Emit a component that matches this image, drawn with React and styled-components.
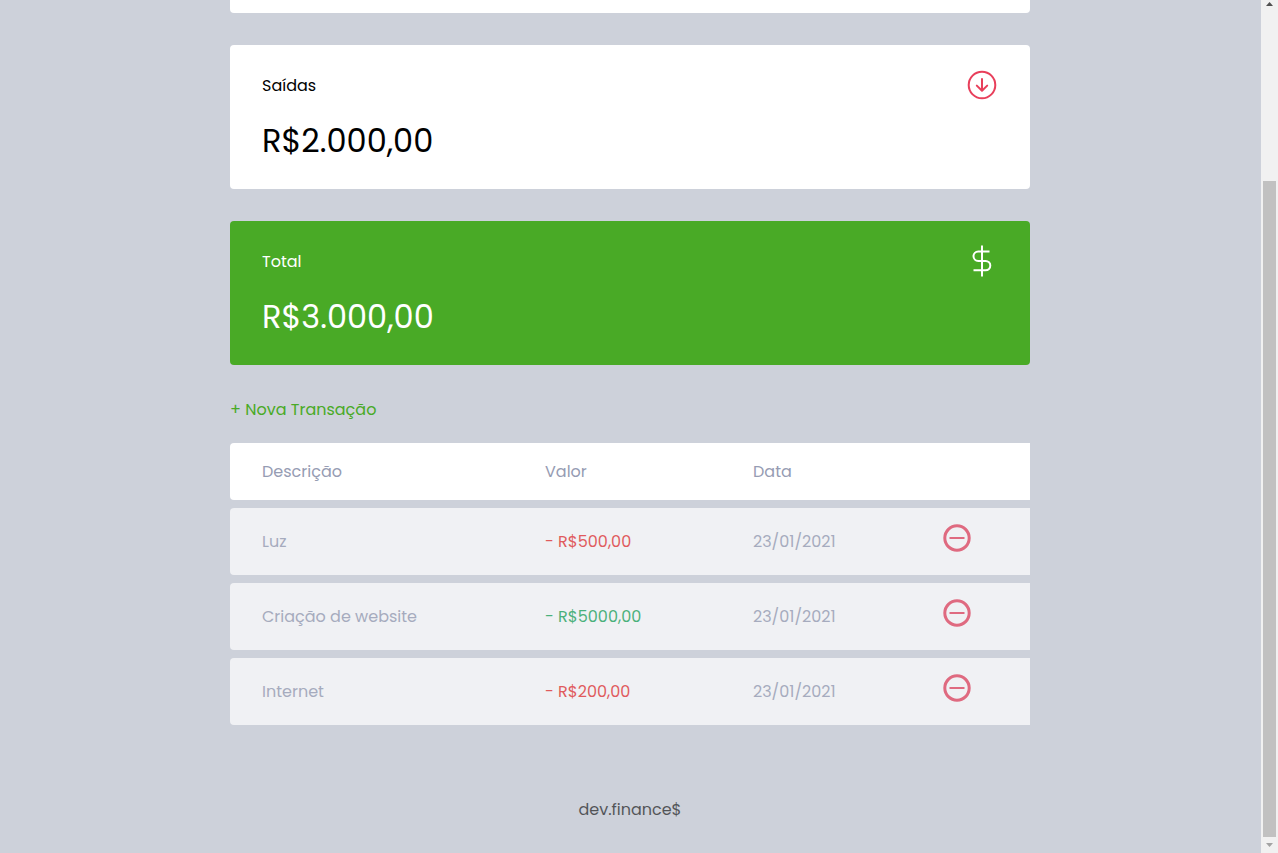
import React from "react";
import styled, { createGlobalStyle, css } from "styled-components";

const GlobalStyle = createGlobalStyle`
  * {
    margin: 0;
    padding: 0;
    box-sizing: border-box;
  }

  body {
    background: #cdd1da;
    font-family: Poppins, Inter, "Noto Sans", sans-serif;
    font-size: 16px;
    line-height: 26px;
    font-weight: 400;
  }
`;

const Page = styled.div`
  display: flex;
  min-height: 100vh;
`;

const Content = styled.div`
  flex: 1;
  min-width: 0;
  padding-right: 1px;
`;

const Container = styled.main`
  width: 90%;
  max-width: 800px;
  margin: 0 auto;
`;

const Balance = styled.section`
  display: grid;
  gap: 32px;
`;

const CardEnd = styled.div`
  height: 13px;
  background: #fff;
  border-radius: 0 0 4px 4px;
`;

const Card = styled.article`
  padding: 24px 32px;
  border-radius: 4px;
  background: #fff;
  color: #000;

  ${({ $total }) =>
    $total &&
    css`
      background: #49aa26;
      color: #fff;
    `}
`;

const CardHeader = styled.header`
  display: flex;
  align-items: center;
  justify-content: space-between;
`;

const CardTitle = styled.h3`
  padding-top: 2px;
  font-size: 16px;
  font-weight: 400;
`;

const CardIcon = styled.svg`
  display: block;
  width: 32px;
  height: 32px;
  fill: none;
  stroke-width: 2;
`;

const CardValue = styled.p`
  margin-top: 16px;
  font-size: 32px;
  line-height: 48px;
`;

const Transactions = styled.section`
  padding-top: 32px;
`;

const NewLink = styled.a`
  display: block;
  width: fit-content;
  margin-bottom: 12px;
  color: #49aa26;
  text-decoration: none;

  &:hover {
    color: #3dd705;
  }
`;

const Table = styled.table`
  width: 100%;
  table-layout: fixed;
  border-spacing: 0 8px;
  color: #969cb3;
`;

const Col = styled.col`
  width: ${({ $width }) => $width};
`;

const HeadCell = styled.th`
  height: 57px;
  padding: 0 32px;
  background: #fff;
  font-weight: 400;
  text-align: left;

  &:first-child {
    border-radius: 4px 0 0 4px;
  }
`;

const amountColors = { expense: "#e92929", income: "#12a454" };

const Cell = styled.td`
  height: 67px;
  padding: 0 32px;
  background: #fff;
  opacity: 0.7;
  color: ${({ $kind }) => amountColors[$kind] || "inherit"};

  &:first-child {
    border-radius: 4px 0 0 4px;
  }
`;

const ActionCell = styled(Cell)`
  padding-top: 16px;
  vertical-align: top;
`;

const RemoveButton = styled.button`
  display: block;
  border: 0;
  background: none;
  cursor: pointer;
`;

const RemoveIcon = styled.svg`
  display: block;
  width: 28px;
  height: 28px;
  fill: none;
  stroke: #e83f5b;
`;

const Footer = styled.footer`
  padding: 64px 0 30px;
  color: #000;
  opacity: 0.6;
  text-align: center;
`;

const ScrollTrack = styled.div`
  display: flex;
  flex-direction: column;
  align-items: center;
  width: 17px;
  padding: 2px 0 6px;
  background: #f1f1f1;
`;

const ScrollSpace = styled.div`
  flex: 175;
`;

const ScrollThumb = styled.div`
  flex: 656;
  width: 13px;
  margin-bottom: 6px;
  background: #c1c1c1;
`;

const Arrow = styled.svg`
  display: block;
  width: 7px;
  height: 4px;
  fill: ${({ $muted }) => ($muted ? "#a3a3a3" : "#505050")};
`;

const transactions = [
  { description: "Luz", amount: "- R$500,00", kind: "expense", date: "23/01/2021" },
  { description: "Criação de website", amount: "- R$5000,00", kind: "income", date: "23/01/2021" },
  { description: "Internet", amount: "- R$200,00", kind: "expense", date: "23/01/2021" },
];

export default function App() {
  return (
    <>
      <GlobalStyle />
      <Page>
        <Content>
          <Container>
            <Balance>
              <CardEnd />
              <Card>
                <CardHeader>
                  <CardTitle>Saídas</CardTitle>
                  <CardIcon viewBox="0 0 32 32" stroke="#e83f5b" aria-hidden="true">
                    <circle cx="16" cy="16" r="13.3" />
                    <path d="M16 10v11.6M10.8 16.6l5.2 5.2 5.2-5.2" strokeLinecap="round" strokeLinejoin="round" />
                  </CardIcon>
                </CardHeader>
                <CardValue>R$2.000,00</CardValue>
              </Card>
              <Card $total>
                <CardHeader>
                  <CardTitle>Total</CardTitle>
                  <CardIcon viewBox="0 0 32 32" stroke="#fff" aria-hidden="true">
                    <path d="M16 .5v31M23.5 6.5H12.2a4.7 4.7 0 0 0 0 9.4h7.4a4.7 4.7 0 0 1 0 9.4H7.5" />
                  </CardIcon>
                </CardHeader>
                <CardValue>R$3.000,00</CardValue>
              </Card>
            </Balance>
            <Transactions>
              <NewLink href="#nova">+ Nova Transação</NewLink>
              <Table>
                <colgroup>
                  <Col $width="auto" />
                  <Col $width="208px" />
                  <Col $width="190px" />
                  <Col $width="119px" />
                </colgroup>
                <thead>
                  <tr>
                    <HeadCell scope="col">Descrição</HeadCell>
                    <HeadCell scope="col">Valor</HeadCell>
                    <HeadCell scope="col">Data</HeadCell>
                    <HeadCell scope="col" aria-label="Ações" />
                  </tr>
                </thead>
                <tbody>
                  {transactions.map((item) => (
                    <tr key={item.description}>
                      <Cell>{item.description}</Cell>
                      <Cell $kind={item.kind}>{item.amount}</Cell>
                      <Cell>{item.date}</Cell>
                      <ActionCell>
                        <RemoveButton type="button" aria-label={`Remover ${item.description}`}>
                          <RemoveIcon viewBox="0 0 28 28">
                            <circle cx="14" cy="14" r="12.2" strokeWidth="3" />
                            <path d="M6.5 14h15" strokeWidth="2" />
                          </RemoveIcon>
                        </RemoveButton>
                      </ActionCell>
                    </tr>
                  ))}
                </tbody>
              </Table>
            </Transactions>
          </Container>
          <Footer>dev.finance$</Footer>
        </Content>
        <ScrollTrack aria-hidden="true">
          <Arrow viewBox="0 0 7 4">
            <path d="M3.5 0L7 4H0z" />
          </Arrow>
          <ScrollSpace />
          <ScrollThumb />
          <Arrow viewBox="0 0 7 4" $muted>
            <path d="M0 0h7L3.5 4z" />
          </Arrow>
        </ScrollTrack>
      </Page>
    </>
  );
}
